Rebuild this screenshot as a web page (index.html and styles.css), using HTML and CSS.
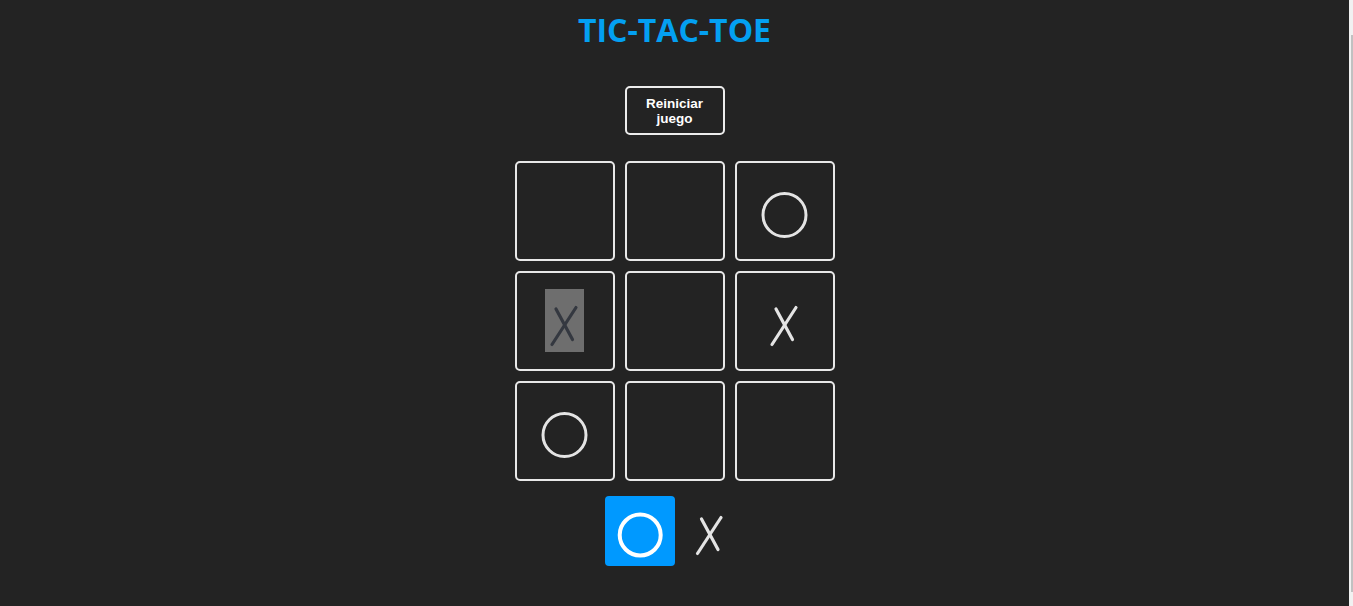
FILE: index.html
```html
<!DOCTYPE html>
<html lang="es">
<head>
<meta charset="utf-8">
<title>TIC-TAC-TOE</title>
<link rel="stylesheet" href="styles.css">
</head>
<body>
<main class="game">
  <h1 class="title">TIC-TAC-TOE</h1>
  <button class="reset" type="button">Reiniciar juego</button>
  <section class="board">
    <div class="cell"></div>
    <div class="cell"></div>
    <div class="cell">
      <svg class="mark" viewBox="2 2 96 96" width="96" height="96"><circle class="o" cx="49.5" cy="54" r="21.5"/></svg>
    </div>
    <div class="cell">
      <svg class="mark" viewBox="2 2 96 96" width="96" height="96">
        <rect class="sel" x="30" y="18" width="39" height="63"/>
        <line class="x x-dark" x1="61" y1="36.5" x2="37" y2="73.5"/>
        <line class="x x-dark" x1="41" y1="38" x2="57.5" y2="68.5"/>
      </svg>
    </div>
    <div class="cell"></div>
    <div class="cell">
      <svg class="mark" viewBox="2 2 96 96" width="96" height="96">
        <line class="x" x1="61" y1="36.5" x2="37" y2="73.5"/>
        <line class="x" x1="41" y1="38" x2="57.5" y2="68.5"/>
      </svg>
    </div>
    <div class="cell">
      <svg class="mark" viewBox="2 2 96 96" width="96" height="96"><circle class="o" cx="49.5" cy="54" r="21.5"/></svg>
    </div>
    <div class="cell"></div>
    <div class="cell"></div>
  </section>
  <section class="turn">
    <div class="turn-box is-active">
      <svg viewBox="0 0 70 70" width="70" height="70"><circle class="o o-turn" cx="35.2" cy="39" r="20.5"/></svg>
    </div>
    <div class="turn-box">
      <svg viewBox="0 0 70 70" width="70" height="70">
        <line class="x" x1="46" y1="21.5" x2="22.5" y2="57.5"/>
        <line class="x" x1="26.5" y1="23" x2="43" y2="53.5"/>
      </svg>
    </div>
  </section>
</main>
<div class="scrollbar"><div class="scrollbar-thumb"></div></div>
</body>
</html>
```

FILE: styles.css
```css
* {
  box-sizing: border-box;
}

html, body {
  margin: 0;
  padding: 0;
  height: 100%;
}

body {
  background: #232323;
  color: #ffffff;
  font-family: "Liberation Sans", Arial, sans-serif;
  overflow: hidden;
}

.game {
  width: calc(100% - 4px);
  display: flex;
  flex-direction: column;
  align-items: center;
  padding-top: 8px;
}

.title {
  margin: 0;
  height: 44px;
  font-family: "Open Sans", "Noto Sans", sans-serif;
  font-weight: 700;
  font-size: 32px;
  line-height: 44px;
  color: #03a0f2;
}

.reset {
  margin-top: 34px;
  width: 100px;
  height: 49px;
  padding: 8px 6px 7px;
  background: transparent;
  border: 2px solid #ececec;
  border-radius: 5px;
  color: #ffffff;
  font-family: "Liberation Sans", Arial, sans-serif;
  font-weight: 700;
  font-size: 13.5px;
  line-height: 15px;
  text-align: center;
}

.board {
  margin-top: 26px;
  display: grid;
  grid-template-columns: repeat(3, 100px);
  grid-auto-rows: 100px;
  gap: 10px;
}

.cell {
  border: 2px solid #e8e8e8;
  border-radius: 5px;
  display: flex;
}

.mark {
  display: block;
}

.o {
  fill: none;
  stroke: #e4e4e4;
  stroke-width: 3;
}

.o-turn {
  stroke: #ffffff;
  stroke-width: 4;
}

.x {
  stroke: #e4e4e4;
  stroke-width: 3.2;
  stroke-linecap: round;
}

.x-dark {
  stroke: #343840;
}

.sel {
  fill: #6e6e6e;
}

.turn {
  margin-top: 15px;
  display: flex;
}

.turn-box {
  width: 70px;
  height: 70px;
  border-radius: 4px;
}

.turn-box svg {
  display: block;
}

.turn-box.is-active {
  background: #0099ff;
}

.scrollbar {
  position: fixed;
  top: 0;
  right: 0;
  width: 4px;
  height: 100%;
  background: #f1f1f1;
  display: flex;
  flex-direction: column;
  align-items: flex-end;
}

.scrollbar-thumb {
  margin-top: 35px;
  width: 2px;
  height: 557px;
  background: #c1c1c1;
}
```
